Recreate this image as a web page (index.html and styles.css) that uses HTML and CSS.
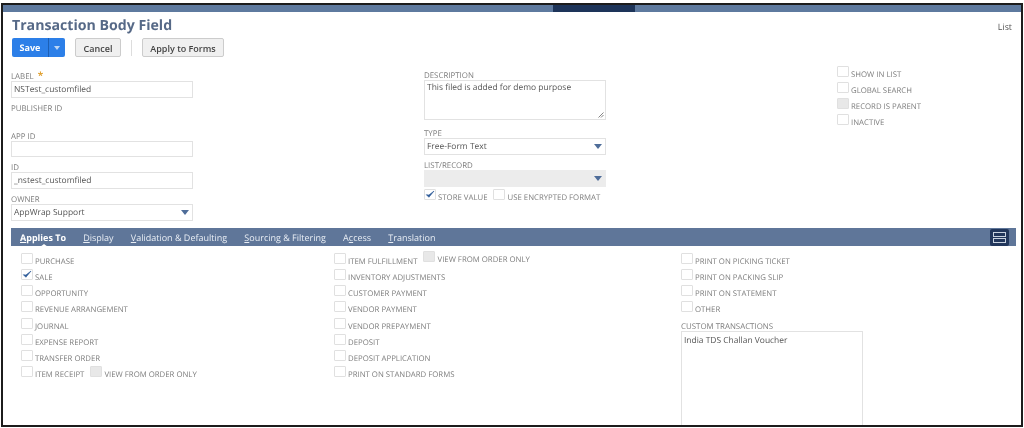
FILE: index.html
```html
<!DOCTYPE html>
<html lang="en">
<head>
<meta charset="utf-8">
<title>Transaction Body Field</title>
<link rel="stylesheet" href="styles.css">
</head>
<body>
<div class="frame">
  <div class="nav"><div class="nav-seg"></div><div class="nav-active"></div><div class="nav-seg nav-grow"></div></div>
  <header class="head">
    <div class="title-row"><h1 class="title">Transaction Body Field</h1><a class="list-link">List</a></div>
    <div class="actions">
      <div class="save"><span class="save-text">Save</span><span class="save-drop"><i class="save-arrow"></i></span></div>
      <button class="btn btn-cancel">Cancel</button>
      <span class="sep"></span>
      <button class="btn btn-apply">Apply to Forms</button>
    </div>
  </header>

  <section class="form">
    <div class="col col-left">
      <div class="field"><div class="lbl">LABEL <span class="req">*</span></div><div class="input">NSTest_customfiled</div></div>
      <div class="field-static"><div class="lbl">PUBLISHER ID</div></div>
      <div class="field"><div class="lbl">APP ID</div><div class="input input-short"></div></div>
      <div class="field"><div class="lbl">ID</div><div class="input">_nstest_customfiled</div></div>
      <div class="field"><div class="lbl">OWNER</div><div class="input select">AppWrap Support<i class="arrow"></i></div></div>
    </div>
    <div class="col col-mid">
      <div class="field field-desc"><div class="lbl">DESCRIPTION</div>
        <div class="textarea">This filed is added for demo purpose
          <svg class="grip" width="6" height="6" viewBox="0 0 6 6"><path d="M0.5 5.5 5.5 0.5M3 5.5 5.5 3" stroke="#666" stroke-width="0.8" fill="none"/></svg>
        </div>
      </div>
      <div class="field"><div class="lbl">TYPE</div><div class="input select">Free-Form Text<i class="arrow"></i></div></div>
      <div class="field field-tight"><div class="lbl">LIST/RECORD</div><div class="input select disabled"><i class="arrow"></i></div></div>
      <div class="inline-checks">
        <span class="cb"><svg class="tick" viewBox="0 0 12 12"><path d="M2 6.2 4.8 9 10.4 2.2 4.8 6.6Z" fill="#2f5c99" stroke="#2f5c99" stroke-width="0.7"/></svg></span><span class="cb-label">STORE VALUE</span>
        <span class="cb cb-second"></span><span class="cb-label">USE ENCRYPTED FORMAT</span>
      </div>
    </div>
    <div class="col col-right">
      <div class="row"><span class="cb"></span><span class="cb-label">SHOW IN LIST</span></div>
      <div class="row"><span class="cb"></span><span class="cb-label">GLOBAL SEARCH</span></div>
      <div class="row"><span class="cb cb-off"></span><span class="cb-label">RECORD IS PARENT</span></div>
      <div class="row"><span class="cb"></span><span class="cb-label">INACTIVE</span></div>
    </div>
  </section>

  <nav class="tabs">
    <span class="tab tab-on"><u>A</u>pplies To</span>
    <span class="tab"><u>D</u>isplay</span>
    <span class="tab"><u>V</u>alidation &amp; Defaulting</span>
    <span class="tab"><u>S</u>ourcing &amp; Filtering</span>
    <span class="tab">A<u>c</u>cess</span>
    <span class="tab"><u>T</u>ranslation</span>
    <span class="tab-toggle"><i class="toggle-bar"></i><i class="toggle-bar"></i></span>
  </nav>

  <section class="applies">
    <div class="acol acol-1">
      <div class="row"><span class="cb"></span><span class="cb-label">PURCHASE</span></div>
      <div class="row"><span class="cb"><svg class="tick" viewBox="0 0 12 12"><path d="M2 6.2 4.8 9 10.4 2.2 4.8 6.6Z" fill="#2f5c99" stroke="#2f5c99" stroke-width="0.7"/></svg></span><span class="cb-label">SALE</span></div>
      <div class="row"><span class="cb"></span><span class="cb-label">OPPORTUNITY</span></div>
      <div class="row"><span class="cb"></span><span class="cb-label">REVENUE ARRANGEMENT</span></div>
      <div class="row"><span class="cb"></span><span class="cb-label">JOURNAL</span></div>
      <div class="row"><span class="cb"></span><span class="cb-label">EXPENSE REPORT</span></div>
      <div class="row"><span class="cb"></span><span class="cb-label">TRANSFER ORDER</span></div>
      <div class="row"><span class="cb"></span><span class="cb-label">ITEM RECEIPT</span><span class="cb cb-off cb-extra"></span><span class="cb-label">VIEW FROM ORDER ONLY</span></div>
    </div>
    <div class="acol acol-2">
      <div class="row"><span class="cb"></span><span class="cb-label">ITEM FULFILLMENT</span><span class="cb cb-off cb-extra cb-raised"></span><span class="cb-label cb-label-raised">VIEW FROM ORDER ONLY</span></div>
      <div class="row"><span class="cb"></span><span class="cb-label">INVENTORY ADJUSTMENTS</span></div>
      <div class="row"><span class="cb"></span><span class="cb-label">CUSTOMER PAYMENT</span></div>
      <div class="row"><span class="cb"></span><span class="cb-label">VENDOR PAYMENT</span></div>
      <div class="row"><span class="cb"></span><span class="cb-label">VENDOR PREPAYMENT</span></div>
      <div class="row"><span class="cb"></span><span class="cb-label">DEPOSIT</span></div>
      <div class="row"><span class="cb"></span><span class="cb-label">DEPOSIT APPLICATION</span></div>
      <div class="row"><span class="cb"></span><span class="cb-label">PRINT ON STANDARD FORMS</span></div>
    </div>
    <div class="acol acol-3">
      <div class="row"><span class="cb"></span><span class="cb-label">PRINT ON PICKING TICKET</span></div>
      <div class="row"><span class="cb"></span><span class="cb-label">PRINT ON PACKING SLIP</span></div>
      <div class="row"><span class="cb"></span><span class="cb-label">PRINT ON STATEMENT</span></div>
      <div class="row"><span class="cb"></span><span class="cb-label">OTHER</span></div>
      <div class="lbl lbl-custom">CUSTOM TRANSACTIONS</div>
      <div class="multi">India TDS Challan Voucher</div>
    </div>
  </section>
</div>
</body>
</html>
```
FILE: styles.css
```css
* { box-sizing: border-box; }
html, body { margin: 0; padding: 0; background: #fff; }
body { font-family: "Open Sans", "Noto Sans", sans-serif; color: #4a4a4a; text-rendering: geometricPrecision; }

.frame {
  width: 1022px;
  height: 424px;
  margin: 3px 1px 0;
  border: 2px solid #1c1c1c;
  overflow: hidden;
  background: #fff;
  filter: blur(0.3px);
}

.nav { display: flex; height: 7px; }
.nav-seg { width: 550px; background: #5e7a9f; }
.nav-active { width: 82px; background: #1d3459; }
.nav-grow { flex: 1; }

.head { padding: 4px 9px 0 9px; }
.title-row { display: flex; justify-content: space-between; align-items: flex-start; height: 18px; }
.title { margin: 0; font-size: 14.15px; line-height: 20px; font-weight: 700; color: #566987; }
.list-link { font-size: 8.8px; line-height: 12px; color: #555; padding-top: 5px; }

.actions { display: flex; align-items: center; margin-top: 4px; height: 19px; }
.save { display: flex; width: 53px; height: 19px; border-radius: 2px; background: #2c7fe8; color: #fff; font-size: 9px; font-weight: 700; }
.save-text { flex: 1; text-align: center; line-height: 20px; }
.save-drop { width: 17px; border-left: 1px solid #1c5fb5; display: flex; align-items: center; justify-content: center; }
.save-arrow { width: 0; height: 0; border-left: 3px solid transparent; border-right: 3px solid transparent; border-top: 4px solid #bcd6f5; }
.btn { height: 19px; padding: 1px 0 0; border: 1px solid #ccc; border-radius: 2px; background: #f0f0f0; color: #444; font-family: inherit; font-size: 9px; font-weight: 600; }
.btn-cancel { width: 46px; margin-left: 10px; }
.sep { width: 1px; height: 16px; margin-left: 10px; background: #ddd; }
.btn-apply { width: 82px; margin-left: 10px; }

.form { display: grid; grid-template-columns: 182px 182px 1fr; column-gap: 231px; height: 162px; margin-top: 9px; padding-left: 8px; }
.col-left { padding-top: 5px; }
.col-mid { padding-top: 4px; }
.lbl { font-size: 7.9px; height: 10px; line-height: 12px; color: #7d7d7d; white-space: nowrap; }
.req { color: #e0a030; font-weight: 700; font-size: 10px; line-height: 8px; margin-left: 2px; }
.field { margin-bottom: 5px; }
.field-static { height: 28px; }
.input { position: relative; height: 17px; border: 1px solid #e2e2e2; font-size: 8.45px; line-height: 16px; padding-left: 2px; color: #555; background: #fff; }
.input-short { height: 16px; margin-bottom: 1px; }
.disabled { background: #ececec; border-color: #ececec; }
.arrow { position: absolute; right: 3px; top: 5px; width: 0; height: 0; border-left: 4px solid transparent; border-right: 4px solid transparent; border-top: 5px solid #4f6d99; }
.field-desc { margin-bottom: 8px; }
.field-tight { margin-bottom: 2px; }
.textarea { position: relative; height: 40px; border: 1px solid #e2e2e2; font-size: 8.45px; line-height: 12px; padding: 1px 2px; color: #555; }
.grip { position: absolute; right: 1px; bottom: 1px; }

.inline-checks { display: flex; align-items: flex-start; }
.cb { flex: none; display: block; width: 12px; height: 11px; border: 1px solid #e0e0e0; border-radius: 1px; background: #fff; }
.cb-off { background: #e8e8e8; }
.cb-label { font-size: 7.8px; line-height: 10px; color: #7d7d7d; margin: 4px 0 0 2px; white-space: nowrap; }
.cb-second { margin-left: 6px; }
.tick { display: block; width: 12px; height: 11px; margin: -1px 0 0 -1px; }

.col-right .row { display: flex; align-items: flex-start; height: 16px; }
.acol .row { display: flex; align-items: flex-start; height: 16.15px; }

.tabs { display: flex; align-items: center; gap: 17.2px; position: relative; height: 18px; margin-left: 8px; width: 1005px; padding-left: 9px; background: #5f7699; color: #e8edf4; font-size: 9px; }
.tab { white-space: nowrap; }
.tab-on { position: relative; font-weight: 700; color: #fff; }
.tab-on::after { content: ""; position: absolute; left: 20px; bottom: -3px; width: 0; height: 0; border-left: 4px solid transparent; border-right: 4px solid transparent; border-bottom: 3px solid #fff; }
.tab-toggle { display: flex; flex-direction: column; gap: 1px; align-items: center; justify-content: center; width: 19px; height: 17px; margin-left: auto; margin-right: 7px; border-radius: 2px; background: #22375c; }
.toggle-bar { display: block; width: 13px; height: 5px; border: 1px solid #c8d2e0; }

.applies { display: grid; grid-template-columns: 313px 347px 1fr; padding: 7px 0 0 18px; }
.cb-extra { margin-left: 6px; }
.cb-raised { margin-top: -2px; }
.cb-label-raised { margin-top: 2px; }
.lbl-custom { margin-top: 3.4px; }
.multi { height: 100px; width: 182px; border: 1px solid #e2e2e2; font-size: 8.45px; line-height: 12px; padding: 3px 2px; color: #555; }
```
